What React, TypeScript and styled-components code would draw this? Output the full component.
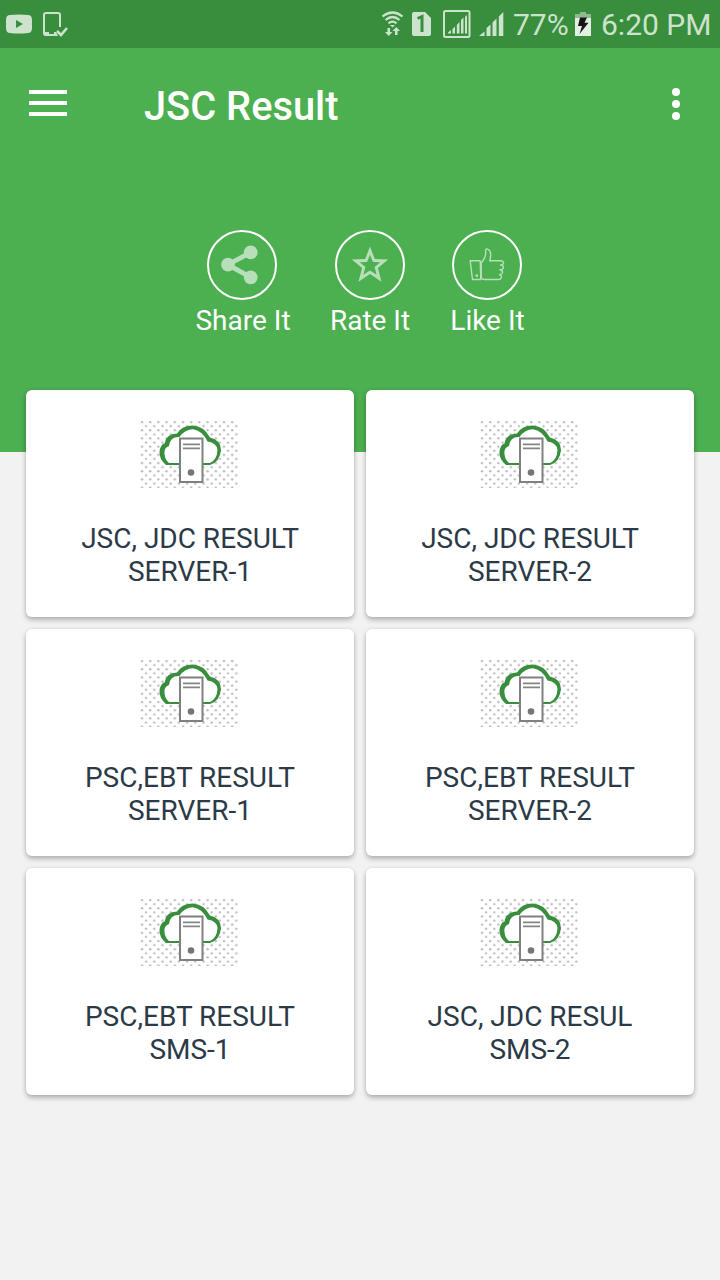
import React from "react";
import styled, { createGlobalStyle } from "styled-components";

const Global = createGlobalStyle`
  * { box-sizing: border-box; }
  body { margin: 0; background: #f2f2f2; font-family: Roboto, "Liberation Sans", sans-serif; }
  svg { display: block; flex: none; }
`;

const Screen = styled.div`
  width: 720px;
  height: 1280px;
  overflow: hidden;
  background: #f2f2f2;
`;

const StatusBar = styled.div`
  height: 48px;
  background: #388e3c;
  display: flex;
  justify-content: space-between;
`;

const StatusText = styled.span<{ $width: number; $gap: number }>`
  width: ${(p) => p.$width}px;
  margin-left: ${(p) => p.$gap}px;
  font-size: 30px;
  line-height: 50px;
  color: #cde3ce;
  white-space: nowrap;
`;

const StatusGroup = styled.div`
  display: flex;
`;

const Header = styled.header`
  height: 404px;
  background: #4caf50;
`;

const AppBar = styled.div`
  height: 112px;
  display: flex;
  align-items: center;
  padding: 0 38px 0 29px;
`;

const Title = styled.h1`
  flex: 1;
  margin: 4px 0 0 77px;
  font-size: 39.8px;
  font-weight: 500;
  line-height: 49px;
  color: #fff;
  white-space: nowrap;
`;

const Actions = styled.div`
  display: grid;
  grid-template-columns: 96px 80px 74px;
  column-gap: 40px;
  padding: 70px 0 0 194px;
`;

const Action = styled.div`
  display: flex;
  flex-direction: column;
  align-items: center;
  color: #fff;
  font-size: 28px;
  line-height: 33px;
  white-space: nowrap;
`;

const ActionLabel = styled.span<{ $inset: number }>`
  padding-left: ${(p) => p.$inset}px;
`;

const Ring = styled.div`
  width: 70px;
  height: 70px;
  margin-bottom: 4px;
  border: 2px solid #fff;
  border-radius: 50%;
`;

const Cards = styled.main`
  display: grid;
  grid-template-columns: 328px 328px;
  grid-auto-rows: 227px;
  gap: 12px;
  justify-content: center;
  margin-top: -62px;
`;

const Card = styled.section`
  position: relative;
  display: flex;
  flex-direction: column;
  align-items: center;
  padding-top: 31px;
  border-radius: 6px;
  background: #fff;
  box-shadow: 0 3px 5px rgba(0, 0, 0, 0.25), 0 0 4px rgba(0, 0, 0, 0.08);
`;

const Picture = styled.div`
  padding-right: 2px;
`;

const CardLabel = styled.div`
  margin-top: 34px;
  font-size: 28px;
  line-height: 33px;
  color: #2c3a48;
  text-align: center;
  white-space: nowrap;
`;

const MenuIcon = styled.svg`
  margin-top: -2px;
`;

const pale = "#cde3ce";
const mint = "#b7dfb9";

const LeftStatusIcons = () => (
  <svg width="72" height="48" fill="none">
    <path d="M10 15Q19 14 28 15Q32 15 32 20V28Q32 33 28 33Q19 34 10 33Q6 33 6 28V20Q6 15 10 15Z" fill={pale} />
    <path d="M16 20V28L23 24Z" fill="#388e3c" />
    <path d="M60 27V15Q60 13 58 13H46Q44 13 44 15V33Q44 35 46 35H56" stroke={pale} strokeWidth="2" />
    <path d="M44 32H49V36H46Q44 36 44 34ZM54 32H56L58 36H54Z" fill={pale} />
    <path d="M57 31L61 35L67 28" stroke={pale} strokeWidth="2.6" />
  </svg>
);

const RightStatusIcons = () => (
  <svg width="126" height="48" fill="none">
    <g stroke={pale} strokeWidth="2.2">
      <path d="M0.500 16.500Q10.500 8.500 20.500 16.500" />
      <path d="M3.500 20Q10.500 14 17.500 20" />
      <path d="M6.500 23.300Q10.500 20 14.500 23.300" />
    </g>
    <path d="M8 25H13L10.500 27.500Z" fill={pale} />
    <path d="M5.500 28H8V32H10.500L6.700 36L3 32H5.500ZM13 35V31H10.500L14.300 27L18 31H15.500V35Z" fill={pale} />
    <path d="M32 12H43L49 18V34Q49 36 47 36H32Q30 36 30 34V14Q30 12 32 12Z" fill={pale} />
    <path d="M35.500 18.500L40 16.500V32" stroke="#388e3c" strokeWidth="3" />
    <rect x="62" y="11" width="25.500" height="26" rx="1.500" stroke={pale} strokeWidth="2" />
    <path d="M66 33.500V32.500L69 30V33.500ZM70.500 33.500V29L73 26.500V33.500ZM74.800 33.500V25L77.500 22V33.500ZM79 33.500V20L81.500 17.500V33.500ZM83 33.500V17L85 15V33.500Z" fill={pale} />
    <path d="M97 36L102.500 31.500V36ZM104.500 36V28L108.500 24.500V36ZM110.500 36V22.500L114.500 18.500V36ZM116.800 36V16.500L121.300 12V36Z" fill={pale} />
  </svg>
);

const Battery = () => (
  <svg width="16" height="48">
    <path d="M0 18V14H5V12H11V14H16V18Z" fill="#8dbb8f" />
    <path d="M0 18H16V36H0Z" fill="#e2efe3" />
    <path d="M5 17.500H12L9.500 22.800H13.500L4.500 34L7 26H3Z" fill="#151515" />
  </svg>
);

const ServerPicture = () => (
  <svg width="98" height="67" viewBox="0 0 98 67">
    <defs>
      <pattern id="dots" width="8.2" height="8.2" patternUnits="userSpaceOnUse" patternTransform="translate(0 -1)">
        <circle cx="2" cy="2" r="1.200" fill="#b9b9b9" />
        <circle cx="6.100" cy="6.100" r="1.200" fill="#b9b9b9" />
      </pattern>
    </defs>
    <rect width="98" height="67" fill="url(#dots)" />
    <path
      d="M30 43H26Q20 38 20.500 32Q21 26 26 24Q27 15 37 14Q43 6 53 6Q64 7 69 18Q79 20 80 29Q81 38 72 43Z"
      fill="#fff"
    />
    <path
      fillRule="evenodd"
      fill="#388e3c"
      d="M41 44H26Q19 38 19.500 31Q20 24 24.500 22.500Q26 13 37 12.500Q42 4.500 52.500 4.500Q64 5 70 16.500Q81 19 81 29Q80 41 70 44H62V42H70Q77 39 77.500 29Q77 22 67.500 20.500Q62 9.500 53 8.300Q45 8.300 39.500 16Q30 15.500 29 25Q23.500 27 24.500 33Q25 39 29 42H41Z"
    />
    <rect x="40" y="17.500" width="22.500" height="43.500" fill="#fff" stroke="#808080" strokeWidth="2" />
    <path d="M43 23.300H60M43 27.300H60" stroke="#858585" strokeWidth="1.700" />
    <circle cx="51" cy="51.500" r="3.300" fill="#757575" />
  </svg>
);

const actions = [
  {
    label: "Share It",
    inset: 2,
    icon: (
      <g fill={mint}>
        <path d="M42 20.300L18.700 32.700L42 45.300" fill="none" stroke={mint} strokeWidth="4.800" />
        <circle cx="41.700" cy="20.300" r="6.900" />
        <circle cx="19" cy="32.700" r="6.900" />
        <circle cx="41.700" cy="45.300" r="6.900" />
      </g>
    ),
  },
  {
    label: "Rate It",
    inset: 0,
    icon: (
      <path
        fill={mint}
        fillRule="evenodd"
        d="M33 14.500L37.800 27L51.200 27.600L40.900 36.100L44.500 49.700L33 42.100L21.500 49.700L25.100 36.100L14.800 27.600L28.200 27ZM33 22.800L30.100 30L22.700 30.300L28.400 35.100L26.400 42.700L33 38.400L39.600 42.700L37.600 35.100L43.300 30.300L35.900 30Z"
      />
    ),
  },
  {
    label: "Like It",
    inset: 1,
    icon: (
      <g fill="none" stroke={mint} strokeWidth="1.400" strokeLinejoin="round">
        <path d="M16.200 28.800H26.200L26.800 47.500H18.500Z" />
        <circle cx="22.800" cy="43.700" r="0.700" />
        <path d="M27.200 31Q32 25.500 31.700 20.500Q31 16.700 33.200 16.900Q37.500 18.500 36.500 25L35.800 28.800H46.500Q49.800 29 49.500 31.200Q49 33 46.500 33Q50 33.500 49.300 36Q48.800 38 46 37.800Q49 38.500 48.500 40.700Q48 42.700 45.500 42.500Q48 43.500 47.300 45.700Q46.800 47.500 44.500 47.500H30.500Q28.200 47.500 27.300 46Z" />
      </g>
    ),
  },
];

const cards = [
  ["JSC, JDC RESULT", "SERVER-1"],
  ["JSC, JDC RESULT", "SERVER-2"],
  ["PSC,EBT RESULT", "SERVER-1"],
  ["PSC,EBT RESULT", "SERVER-2"],
  ["PSC,EBT RESULT", "SMS-1"],
  ["JSC, JDC RESUL", "SMS-2"],
];

export default function App() {
  return (
    <Screen>
      <Global />
      <StatusBar>
        <LeftStatusIcons />
        <StatusGroup>
          <RightStatusIcons />
          <StatusText $width={62} $gap={5}>77%</StatusText>
          <Battery />
          <StatusText $width={119} $gap={10}>6:20 PM</StatusText>
        </StatusGroup>
      </StatusBar>
      <Header>
        <AppBar>
          <MenuIcon width="38" height="28">
            <path d="M0 3H38M0 14H38M0 25H38" stroke="#fff" strokeWidth="4" />
          </MenuIcon>
          <Title>JSC Result</Title>
          <svg width="12" height="34" fill="#fff">
            <circle cx="6" cy="5" r="4" />
            <circle cx="6" cy="17" r="4" />
            <circle cx="6" cy="29" r="4" />
          </svg>
        </AppBar>
        <Actions>
          {actions.map((a) => (
            <Action key={a.label}>
              <Ring>
                <svg width="66" height="66">{a.icon}</svg>
              </Ring>
              <ActionLabel $inset={a.inset}>{a.label}</ActionLabel>
            </Action>
          ))}
        </Actions>
      </Header>
      <Cards>
        {cards.map(([top, bottom], i) => (
          <Card key={i}>
            <Picture>
              <ServerPicture />
            </Picture>
            <CardLabel>
              {top}
              <br />
              {bottom}
            </CardLabel>
          </Card>
        ))}
      </Cards>
    </Screen>
  );
}
